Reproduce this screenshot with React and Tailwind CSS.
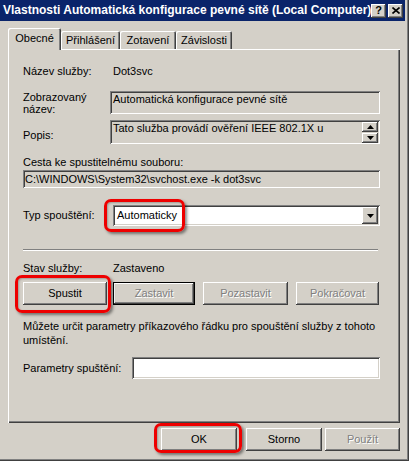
import React from 'react'

/* ─── Classic Win2000 bevels ─────────────────────────────────────────────── */

const SUNKEN = 'shadow-[inset_1px_1px_#808080,inset_-1px_-1px_#ffffff,inset_2px_2px_#404040,inset_-2px_-2px_#d4d0c8]'
const RAISED = 'shadow-[inset_-1px_-1px_#404040,inset_1px_1px_#ffffff,inset_-2px_-2px_#808080]'
const DISABLED_TEXT = 'text-[#808080] [text-shadow:1px_1px_0_#ffffff]'

function Button({ children, disabled, strong, className = '' }) {
  return (
    <div
      className={`flex h-[23px] shrink-0 items-center justify-center bg-[#d4d0c8] ${
        strong ? 'border border-black' : ''
      } ${RAISED} ${disabled ? DISABLED_TEXT : 'text-black'} ${className}`}
    >
      {children}
    </div>
  )
}

function Arrow({ up }) {
  return (
    <svg width="7" height="4" viewBox="0 0 7 4">
      {up ? <path d="M3.5 0 L7 4 L0 4 Z" fill="#000" /> : <path d="M0 0 L7 0 L3.5 4 Z" fill="#000" />}
    </svg>
  )
}

function Highlight({ className }) {
  return (
    <div
      className={`pointer-events-none absolute rounded-[7px] border-[3px] border-[#ee0000] shadow-[2px_2px_3px_rgba(0,0,0,0.45),inset_1px_1px_2px_rgba(0,0,0,0.25)] ${className}`}
    />
  )
}

function Tab({ label, active, className = '' }) {
  return (
    <div
      className={`relative flex items-center justify-center rounded-t-[2px] bg-[#d4d0c8] shadow-[inset_1px_1px_#ffffff,inset_-1px_0_#404040,inset_-2px_0_#808080] ${
        active ? 'z-10 h-[22px] pb-[1px]' : 'h-[18px]'
      } ${className}`}
    >
      {label}
    </div>
  )
}

/* ─── Dialog ─────────────────────────────────────────────────────────────── */

export default function App() {
  return (
    <div className="relative h-[461px] w-[409px] overflow-hidden bg-[#d4d0c8] text-[11px] leading-[13px] text-black shadow-[inset_-1px_-1px_#404040,inset_-2px_-2px_#808080] [font-family:'Liberation_Sans',Arial,sans-serif]">
      {/* Title bar */}
      <div className="flex h-[21px] w-[405px] items-center bg-[#0a246a] pl-[3px] pr-[2px]">
        <span className="flex-1 whitespace-nowrap text-[12px] font-bold text-white">
          Vlastnosti Automatická konfigurace pevné sítě (Local Computer)
        </span>
        <div className={`flex h-[14px] w-[16px] items-center justify-center bg-[#d4d0c8] text-[11px] font-bold ${RAISED}`}>?</div>
        <div className={`ml-[2px] flex h-[14px] w-[16px] items-center justify-center bg-[#d4d0c8] ${RAISED}`}>
          <svg width="8" height="7" viewBox="0 0 8 7">
            <path d="M0.5 0.5 L7.5 6.5 M7.5 0.5 L0.5 6.5" stroke="#000" strokeWidth="1.6" />
          </svg>
        </div>
      </div>

      {/* Tabs */}
      <div className="ml-[8px] mt-[7px] flex h-[22px] items-end">
        <Tab label="Obecné" active className="w-[53px]" />
        <Tab label="Přihlášení" className="mb-[1px] w-[59px]" />
        <Tab label="Zotavení" className="mb-[1px] w-[56px]" />
        <Tab label="Závislosti" className="mb-[1px] w-[56px]" />
      </div>

      {/* Tab panel */}
      <div className="-mt-[1px] ml-[8px] flex h-[374px] w-[392px] flex-col pl-[15px] pt-[16px] shadow-[inset_1px_1px_#ffffff,inset_-1px_-1px_#404040,inset_-2px_-2px_#808080]">
        <div className="flex h-[13px] items-center">
          <span className="w-[90px]">Název služby:</span>
          <span>Dot3svc</span>
        </div>

        <div className="mt-[11px] flex h-[27px] items-center">
          <span className="w-[87px] leading-[12px]">
            Zobrazovaný
            <br />
            název:
          </span>
          <div className={`h-[23px] w-[270px] px-[3px] pt-[2px] ${SUNKEN}`}>Automatická konfigurace pevné sítě</div>
        </div>

        <div className="mt-[4px] flex h-[24px]">
          <span className="mt-[9px] w-[87px]">Popis:</span>
          <div className={`flex h-[24px] w-[270px] justify-between pl-[3px] pr-[2px] pt-[2px] ${SUNKEN}`}>
            <span>Tato služba provádí ověření IEEE 802.1X u</span>
            <div className="flex flex-col gap-[1px]">
              <div className={`flex h-[10px] w-[16px] items-center justify-center bg-[#d4d0c8] ${RAISED}`}>
                <Arrow up />
              </div>
              <div className={`flex h-[10px] w-[16px] items-center justify-center bg-[#d4d0c8] ${RAISED}`}>
                <Arrow />
              </div>
            </div>
          </div>
        </div>

        <div className="mt-[12px] h-[13px]">Cesta ke spustitelnému souboru:</div>
        <div className={`mt-[1px] flex h-[18px] w-[357px] items-center px-[2px] ${SUNKEN}`}>
          C:\WINDOWS\System32\svchost.exe -k dot3svc
        </div>

        <div className="mt-[17px] flex h-[21px] items-center">
          <span className="w-[90px]">Typ spouštění:</span>
          <div className={`flex h-[21px] w-[267px] items-center justify-between bg-white pl-[4px] pr-[2px] ${SUNKEN}`}>
            <span>Automaticky</span>
            <div className={`flex h-[17px] w-[16px] items-center justify-center bg-[#d4d0c8] ${RAISED}`}>
              <Arrow />
            </div>
          </div>
        </div>

        <div className="mt-[23px] h-[2px] w-[355px] border-b border-t border-b-white border-t-[#808080]" />

        <div className="mt-[11px] flex h-[13px] items-center">
          <span className="w-[90px]">Stav služby:</span>
          <span>Zastaveno</span>
        </div>

        <div className="mt-[7px] flex">
          <Button className="w-[84px]">Spustit</Button>
          <Button disabled strong className="ml-[6px] w-[82px]">Zastavit</Button>
          <Button disabled className="ml-[8px] w-[85px]">Pozastavit</Button>
          <Button disabled className="ml-[8px] w-[83px]">Pokračovat</Button>
        </div>

        <p className="mt-[14px] leading-[14px]">
          Můžete určit parametry příkazového řádku pro spouštění služby z tohoto
          <br />
          umístění.
        </p>

        <div className="mt-[10px] flex h-[22px] items-center">
          <span className="w-[109px]">Parametry spuštění:</span>
          <div className={`h-[22px] w-[248px] bg-white ${SUNKEN}`} />
        </div>
      </div>

      {/* Dialog buttons */}
      <div className="ml-[161px] mt-[5px] flex">
        <Button className="w-[76px]">OK</Button>
        <Button className="ml-[9px] w-[76px]">Storno</Button>
        <Button disabled className="ml-[3px] w-[75px]">Použít</Button>
      </div>

      <Highlight className="left-[104px] top-[199px] h-[33px] w-[81px]" />
      <Highlight className="left-[15px] top-[275px] h-[38px] w-[96px]" />
      <Highlight className="left-[154px] top-[423px] h-[30px] w-[88px]" />
    </div>
  )
}
